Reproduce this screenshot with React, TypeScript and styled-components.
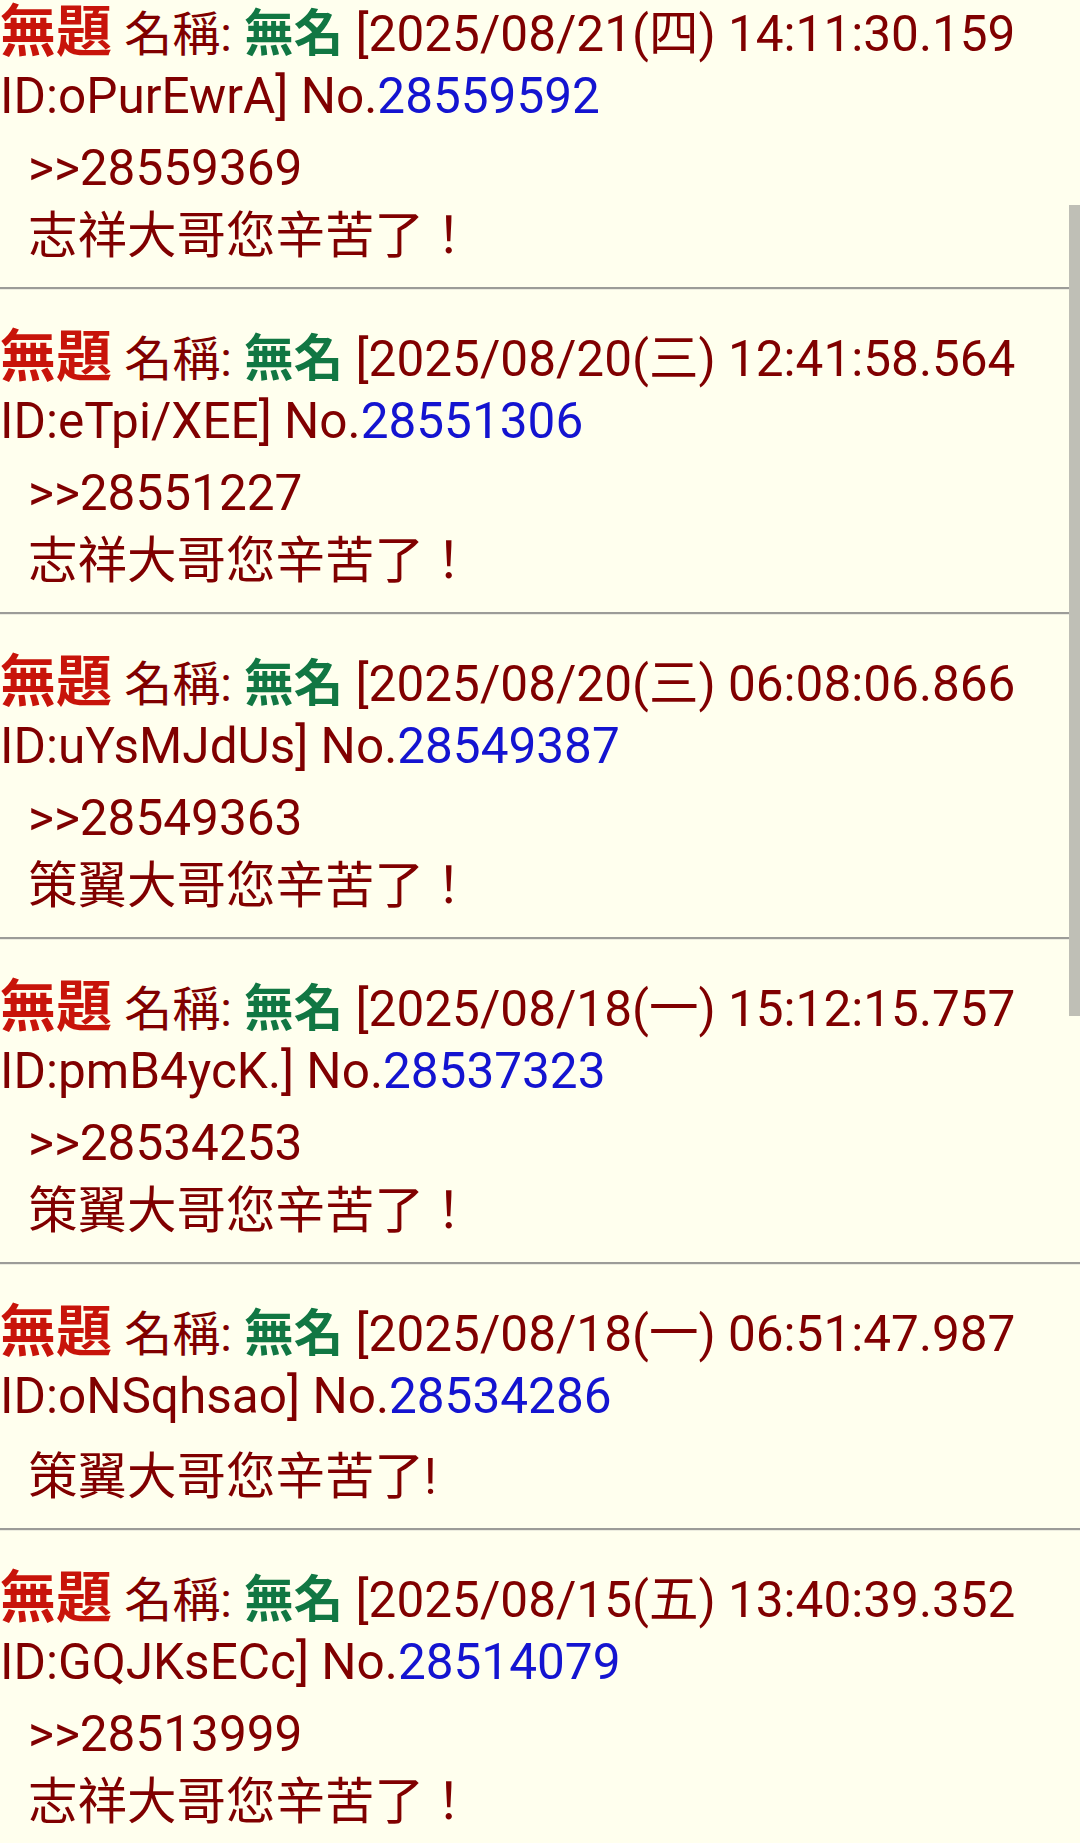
import styled, { createGlobalStyle } from 'styled-components'

const GlobalStyle = createGlobalStyle`
  html, body {
    margin: 0;
    padding: 0;
    background: #ffffee;
  }
  body {
    font-family: Roboto, "Noto Sans CJK TC", "Noto Sans", sans-serif;
    color: #800000;
  }
`

const Page = styled.div`
  position: relative;
  width: 1080px;
  min-height: 1843px;
  overflow: hidden;
  background: #ffffee;
`

const Thread = styled.div`
  display: flex;
  flex-direction: column;
`

const Post = styled.section`
  display: flex;
  flex-direction: column;
  padding-top: 3px;
`

const Header = styled.div`
  font-size: 49.5px;
  white-space: nowrap;
`

const HeaderLine = styled.div`
  height: 62px;
  line-height: 62px;
`

const Title = styled.b`
  font-size: 56px;
  line-height: 1;
  color: #c8140a;
  font-weight: bold;
`

const Label = styled.span`
  font-size: 48px;
  line-height: 1;
`

const Name = styled.b`
  font-weight: bold;
  line-height: 1;
  color: #117743;
`

const PostNo = styled.a`
  color: #1414d0;
  text-decoration: none;
`

const Body = styled.blockquote<{ $plain?: boolean }>`
  margin: ${(p) => (p.$plain ? '16px' : '7px')} 0 0 28px;
  font-size: 49.5px;
  line-height: 68px;
`

const Line = styled.div`
  height: 68px;
`

const Divider = styled.hr`
  margin: 17px 0 35px;
  height: 0;
  border: none;
  border-top: 2px solid #9c9c98;
  border-bottom: 1px solid #ececdf;
`

const ScrollThumb = styled.div`
  position: absolute;
  top: 205px;
  right: 0;
  width: 11px;
  height: 811px;
  background: #bfbfb6;
`

type PostData = {
  date: string
  time: string
  id: string
  no: string
  quote?: string
  text: string
}

const posts: PostData[] = [
  { date: '2025/08/21(四)', time: '14:11:30.159', id: 'oPurEwrA', no: '28559592', quote: '28559369', text: '志祥大哥您辛苦了！' },
  { date: '2025/08/20(三)', time: '12:41:58.564', id: 'eTpi/XEE', no: '28551306', quote: '28551227', text: '志祥大哥您辛苦了！' },
  { date: '2025/08/20(三)', time: '06:08:06.866', id: 'uYsMJdUs', no: '28549387', quote: '28549363', text: '策翼大哥您辛苦了！' },
  { date: '2025/08/18(一)', time: '15:12:15.757', id: 'pmB4ycK.', no: '28537323', quote: '28534253', text: '策翼大哥您辛苦了！' },
  { date: '2025/08/18(一)', time: '06:51:47.987', id: 'oNSqhsao', no: '28534286', text: '策翼大哥您辛苦了!' },
  { date: '2025/08/15(五)', time: '13:40:39.352', id: 'GQJKsECc', no: '28514079', quote: '28513999', text: '志祥大哥您辛苦了！' },
]

function App() {
  return (
    <Page>
      <GlobalStyle />
      <Thread>
        {posts.map((p, i) => (
          <Post key={p.no}>
            <Header>
              <HeaderLine>
                <Title>無題</Title> <Label>名稱:</Label> <Name>無名</Name> [{p.date} {p.time}
              </HeaderLine>
              <HeaderLine>
                ID:{p.id}] No.<PostNo href="#">{p.no}</PostNo>
              </HeaderLine>
            </Header>
            <Body $plain={!p.quote}>
              {p.quote && <Line>&gt;&gt;{p.quote}</Line>}
              <Line>{p.text}</Line>
            </Body>
            {i < posts.length - 1 && <Divider />}
          </Post>
        ))}
      </Thread>
      <ScrollThumb />
    </Page>
  )
}

export default App
